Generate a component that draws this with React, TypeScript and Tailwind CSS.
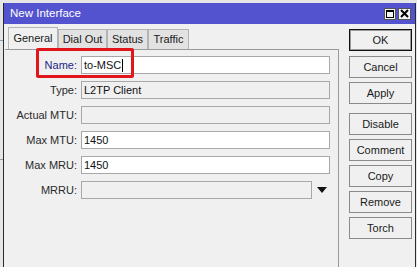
import { ReactNode } from 'react';

const rows: { label: string; value?: string; editable: boolean; accent?: boolean; combo?: boolean; cursor?: boolean }[] = [
  { label: 'Name:', value: 'to-MSC', editable: true, accent: true, cursor: true },
  { label: 'Type:', value: 'L2TP Client', editable: false },
  { label: 'Actual MTU:', editable: false },
  { label: 'Max MTU:', value: '1450', editable: true },
  { label: 'Max MRU:', value: '1450', editable: true },
  { label: 'MRRU:', editable: false, combo: true },
];

const tabs = ['General', 'Dial Out', 'Status', 'Traffic'];

function Btn({ children, mt, primary }: { children: ReactNode; mt: string; primary?: boolean }) {
  return (
    <div
      className={`${mt} h-[22px] w-[63px] flex items-center justify-center bg-[#f0f0f0] text-[#1a1a1a] ${
        primary ? 'border border-[#111] ring-1 ring-inset ring-[#9a9a9a]' : 'border border-[#8a8a8a]'
      }`}
    >
      {children}
    </div>
  );
}

export default function App() {
  return (
    <div
      className="relative w-[417px] h-[267px] overflow-hidden bg-[#e6e6e6] pt-[3px] pl-[3px] pr-[1px] text-[11px] leading-none"
      style={{ fontFamily: '"Liberation Sans", Arial, sans-serif' }}
    >
      {/* background window edge */}
      <div className="absolute left-0 top-[40px] w-[3px] h-[120px] border-t border-b border-[#9a9a9a]" />

      <div className="h-full flex flex-col border-l border-r border-[#2a2a2a] bg-[#f0f0f0]">
        {/* Title bar */}
        <div className="h-[21px] bg-[#5353d0] flex items-center pl-[6px] pr-[4px] text-white text-[11.5px]">
          <span>New Interface</span>
          <div className="ml-auto flex gap-[2px]">
            <div className="w-[12px] h-[12px] bg-[#f4f4f4] border border-[#555] flex items-center justify-center">
              <div className="w-[8px] h-[8px] border border-black border-t-2" />
            </div>
            <div className="w-[13px] h-[12px] bg-[#f4f4f4] border border-[#555] flex items-center justify-center">
              <svg width="9" height="9" viewBox="0 0 9 9">
                <path d="M1 1 L8 8 M8 1 L1 8" stroke="black" strokeWidth="2" />
              </svg>
            </div>
          </div>
        </div>

        {/* Body */}
        <div className="flex-1 flex">
          <div className="w-[335px] flex flex-col pt-[3px] pl-[1px]">
            <div className="flex items-end h-[22px] pl-[3px]">
              {tabs.map((t, i) => (
                <div
                  key={t}
                  className={`flex items-center justify-center border border-b-0 border-[#b4b4b4] text-[#1a1a1a] ${
                    i === 0 ? 'h-[22px] w-[50px] bg-[#f0f0f0]' : 'h-[20px] bg-[#e2e2e2]'
                  } ${i === 1 ? 'w-[49px]' : ''} ${i === 2 ? 'w-[41px]' : ''} ${i === 3 ? 'w-[41px]' : ''}`}
                >
                  {t}
                </div>
              ))}
            </div>
            <div className="flex-1 border-t border-r border-[#9a9a9a] pt-[6px] flex flex-col gap-[7px]">
              {rows.map((r) => (
                <div key={r.label} className="flex items-center h-[18px]">
                  <div className={`w-[72px] text-right ${r.accent ? 'text-[#1c1c8a]' : 'text-[#2a2a2a]'}`}>
                    {r.label}
                  </div>
                  <div
                    className={`ml-[4px] h-[18px] border border-[#a8a8a8] flex items-center pl-[2px] text-[#111] ${
                      r.editable ? 'bg-white' : 'bg-[#f0f0f0]'
                    } ${r.combo ? 'w-[231px]' : 'w-[249px]'}`}
                  >
                    {r.value}
                    {r.cursor && <span className="inline-block w-[1px] h-[13px] bg-black ml-[1px]" />}
                  </div>
                  {r.combo && (
                    <svg className="ml-[5px]" width="10" height="6" viewBox="0 0 10 6">
                      <path d="M0 0 H10 L5 6 Z" fill="#111" />
                    </svg>
                  )}
                </div>
              ))}
            </div>
          </div>

          <div className="ml-[10px] flex flex-col">
            <Btn mt="mt-[5px]" primary>OK</Btn>
            <Btn mt="mt-[5px]">Cancel</Btn>
            <Btn mt="mt-[4px]">Apply</Btn>
            <Btn mt="mt-[9px]">Disable</Btn>
            <Btn mt="mt-[4px]">Comment</Btn>
            <Btn mt="mt-[4px]">Copy</Btn>
            <Btn mt="mt-[4px]">Remove</Btn>
            <Btn mt="mt-[4px]">Torch</Btn>
          </div>
        </div>
      </div>

      {/* Annotation */}
      <div className="absolute left-[36px] top-[48px] w-[98px] h-[30px] border-[3px] border-[#e0161c] rounded-[2px]" />
    </div>
  );
}
